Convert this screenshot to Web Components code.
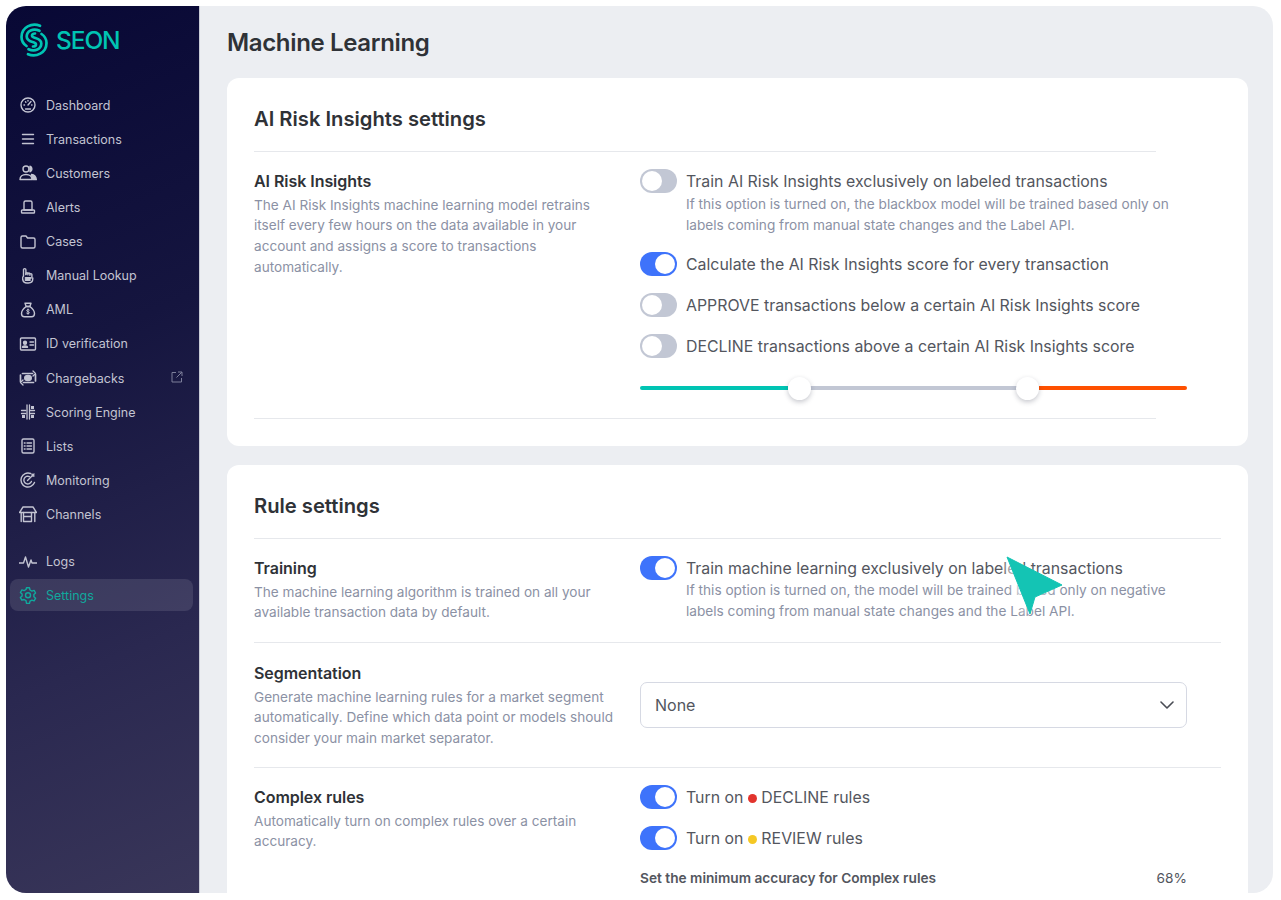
<!DOCTYPE html>
<html>
<head>
<meta charset="utf-8">
<title>Machine Learning</title>
<style>
  html, body { margin: 0; background: #fff; }
  body { font-family: Inter, "Liberation Sans", sans-serif; padding: 6px 8px 0 6px; height: 894px; box-sizing: border-box; overflow: hidden; }
</style>
</head>
<body>
<seon-app>
  <seon-sidebar slot="side"></seon-sidebar>
  <h-title slot="main">Machine Learning</h-title>

  <seon-card slot="main" heading="AI Risk Insights settings" short style="height:368px">
    <seon-row label="AI Risk Insights" top="17" desc="The AI Risk Insights machine learning model retrains itself every few hours on the data available in your account and assigns a score to transactions automatically.">
      <seon-option nudge note="If this option is turned on, the blackbox model will be trained based only on labels coming from manual state changes and the Label API.">Train AI Risk Insights exclusively on labeled transactions</seon-option>
      <seon-option on>Calculate the AI Risk Insights score for every transaction</seon-option>
      <seon-option>APPROVE transactions below a certain AI Risk Insights score</seon-option>
      <seon-option>DECLINE transactions above a certain AI Risk Insights score</seon-option>
      <seon-range></seon-range>
    </seon-row>
  </seon-card>

  <seon-card slot="main" heading="Rule settings" style="margin-top:19px">
    <seon-row label="Training" top="17" line desc="The machine learning algorithm is trained on all your available transaction data by default." style="height:104px">
      <seon-option on note="If this option is turned on, the model will be trained based only on negative labels coming from manual state changes and the Label API.">Train machine learning exclusively on labeled transactions</seon-option>
    </seon-row>
    <seon-row label="Segmentation" top="18" line desc="Generate machine learning rules for a market segment automatically. Define which data point or models should consider your main market separator." style="height:125px">
      <seon-select>None</seon-select>
    </seon-row>
    <seon-row label="Complex rules" top="17" desc="Automatically turn on complex rules over a certain accuracy." style="padding-bottom:60px">
      <seon-option on>Turn on <seon-dot color="#e2342d"></seon-dot> DECLINE rules</seon-option>
      <seon-option on>Turn on <seon-dot color="#f5c824"></seon-dot> REVIEW rules</seon-option>
      <seon-accuracy></seon-accuracy>
    </seon-row>
  </seon-card>
  <seon-cursor slot="over"></seon-cursor>
</seon-app>

<script>
  // small helper, every element below is just a shadow root with its own style
  let shadow = (el, html) => { el.attachShadow({ mode: "open" }).innerHTML = html; };

  customElements.define("seon-app", class extends HTMLElement {
    connectedCallback() {
      shadow(this, `<style>
        :host { display: flex; position: relative; width: 1267px; height: 887px; border-radius: 20px; overflow: hidden; background: #eceef2; }
        .main { flex: 1; min-width: 0; padding: 0 25px 0 27px; overflow: hidden; }
      </style>
      <slot name="side"></slot>
      <div class="main"><slot name="main"></slot></div>
      <slot name="over"></slot>`);
    }
  });

  customElements.define("h-title", class extends HTMLElement {
    connectedCallback() {
      shadow(this, `<style>
        :host { display: block; height: 72px; padding-top: 20px; box-sizing: border-box; font-size: 24px; line-height: 34px; font-weight: 600; color: #2f3237; letter-spacing: -.35px; }
      </style><slot></slot>`);
    }
  });

  const ICONS = {
    Dashboard: '<circle cx="9" cy="9" r="7"/><path d="M9 9l3-3.500"/><path d="M5 9h.5M6.500 5.800l.4.4M9 4.400v.6M13 9h-.4M6.500 13h5"/>',
    Transactions: '<path d="M3.500 4.500h11M3.500 9h11M3.500 13.500h11"/>',
    Customers: '<circle cx="7" cy="5" r="3"/><path d="M1 15.500c0-3 2.500-5 6-5s6 2 6 5z"/><path d="M11 2.200a3 3 0 010 5.600z" fill="currentColor"/><path d="M12.500 10.500c2.500 .3 4.500 2 4.800 5h-3.500z" fill="currentColor"/>',
    Alerts: '<path d="M5 12V4.500a1.500 1.500 0 011.500-1.500h5a1.500 1.500 0 011.500 1.500V12z"/><rect x="2.500" y="12" width="13" height="3" rx=".8"/>',
    Cases: '<path d="M2 4.500A1.500 1.500 0 013.500 3h3.500l1.500 2h6A1.500 1.500 0 0116 6.500v7a1.500 1.500 0 01-1.500 1.500h-11A1.500 1.500 0 012 13.500z"/>',
    "Manual Lookup": '<path d="M4.500 9V2.800a1.200 1.200 0 012.400 0V7.500"/><path d="M6.900 7.500V6.800a1 1 0 012 0v1M8.900 7.800V7a1 1 0 012 0v1M10.900 8.200V7.600a1 1 0 012 0v3.400"/><path d="M4.500 9c-1 .6-1 2-.8 3.500.4 2.200 2 3.500 4.300 3.500h1.500c2.800 0 4.300-2 4.300-4.500V11"/><path d="M6.500 11h5M6.500 13h4.500" stroke-width="1.800"/>',
    AML: '<path d="M6 2.200h6L10.800 5.500H7.200z"/><path d="M7.200 5.500C4.500 7.500 2.500 10 2.500 12.500c0 2 1.200 3.200 3 3.200h7c1.800 0 3-1.200 3-3.200 0-2.500-2-5-4.700-7z"/><path d="M10.300 9c-.5-.6-2.600-.8-2.600.6 0 1.300 2.600.8 2.600 2.100 0 1.300-2.100 1.200-2.700.5M9 8v5.200" stroke-width="1"/>',
    "ID verification": '<rect x="1.500" y="3" width="15" height="12" rx="1"/><circle cx="6" cy="7.800" r="1.500" fill="currentColor"/><path d="M3.500 12.200c0-1.800 5-1.800 5 0z" fill="currentColor"/><path d="M11 7h3.500M11 10h3.500"/>',
    Chargebacks: '<path d="M3.500 4.500h10M4.500 13.500h10M1.500 6v6.500M16.500 5.500V12" stroke-width="1.700"/><ellipse cx="9" cy="9" rx="3.300" ry="2.600" fill="currentColor"/><path d="M14 2l2.500 2.500L14 7M4 11l-2.500 2.500L4 16" stroke-width="1.300"/>',
    "Scoring Engine": '<path d="M8 2v14M10.500 2v14" stroke-width="1.300"/><path d="M2.500 7.500h4.300M11.500 7.500h4M2.500 10.500h4.300M11.500 10.500h4" stroke-width="1.300"/><rect x="3" y="12" width="3" height="3" fill="currentColor" stroke="none"/><rect x="12" y="12" width="3" height="3" fill="currentColor" stroke="none"/><rect x="12" y="3" width="3" height="3" fill="currentColor" stroke="none"/>',
    Lists: '<rect x="3" y="2" width="12" height="14" rx="1.500"/><path d="M8 6h4.500M8 9h4.500M8 12h4.500M5.300 6h.8M5.300 9h.8M5.300 12h.8"/>',
    Monitoring: '<path d="M11.500 2.500A7 7 0 1015.500 11.500"/><path d="M10.500 5.600A3.900 3.900 0 1012.400 10.500"/><path d="M8.500 9.500l6.500-6.500M13 3l.3 1.700L15 5"/>',
    Channels: '<path d="M4 2h10l3.500 5.500H.5z"/><path d="M2.200 7.500V16.500M15.800 7.500V16.500M4.500 7.500V16.500h8V7.500M4.500 11.500h8"/>',
    Logs: '<path d="M0 10h4.500l2-6 3 10 2.500-7 1 3H18"/>',
    Settings: '<path d="M7.500 1.800h3l.5 2.200 1.900 1.100 2.200-.7 1.500 2.600-1.700 1.500v2.200l1.700 1.500-1.500 2.600-2.200-.7-1.900 1.100-.5 2.200h-3L7 14.600l-1.900-1.100-2.200.7-1.500-2.600 1.700-1.500V8l-1.700-1.500 1.500-2.600 2.200.7L7 3.500z"/><circle cx="9" cy="9.300" r="2.500"/>'
  };

  customElements.define("seon-sidebar", class extends HTMLElement {
    connectedCallback() {
      let item = (name, cls = "") => `<a class="${cls}"><svg viewBox="0 0 18 18" width="18" height="18" fill="none" stroke="currentColor" stroke-width="1.400" stroke-linecap="round" stroke-linejoin="round">${ICONS[name]}</svg><span>${name}</span>${name == "Chargebacks" ? '<svg class="ext" viewBox="0 0 12 12" width="12" height="12" fill="none" stroke="currentColor" stroke-width="1"><path d="M5 1.500H1v9.500h9.500V7M7 1h4v4M11 1L5.500 6.500"/></svg>' : ""}</a>`;
      let top = ["Dashboard", "Transactions", "Customers", "Alerts", "Cases", "Manual Lookup", "AML", "ID verification", "Chargebacks", "Scoring Engine", "Lists", "Monitoring", "Channels"];
      shadow(this, `<style>
        :host { display: block; flex: none; width: 194px; box-sizing: border-box; padding: 0 6px 0 4px; background: linear-gradient(157deg, #080835 0%, #15153f 38%, #2a2850 72%, #393659 100%); border-right: 1px solid #c9ccd6; }
        .logo { display: flex; align-items: center; gap: 8px; height: 68px; padding: 0 0 0 10px; color: #00c4b3; font-size: 24.5px; font-weight: 500; letter-spacing: -1.1px; }
        nav { display: flex; flex-direction: column; margin-top: 14.1px; }
        a { display: flex; align-items: center; height: 34.11px; padding-left: 9px; gap: 9px; color: #c3c4d2; font-size: 12.5px; position: relative; border-radius: 8px; }
        .ext { position: absolute; right: 10px; top: 10px; color: #7d7f9a; }
        .gap { height: 13px; }
        .active { background: rgba(255, 255, 255, .11); color: #10a99d; height: 32px; margin-top: .6px; }
      </style>
      <div class="logo">
        <svg viewBox="0 0 28 34" width="28" height="34" fill="none" stroke="#00c4b3" stroke-width="2.700" stroke-linecap="round" stroke-linejoin="round">
          <path d="M20 2.800C12-.5 1.500 4 1.500 14c0 4 2 7 5 9"/>
          <path d="M19.500 7.800C13 4.800 6.700 8 6.700 13.500c0 4.500 4.500 5 7.300 6 3 1 2.500 4-1 4"/>
          <path d="M8 31.200C16 34.500 26.500 30 26.500 20c0-4-2-7-5-9"/>
          <path d="M8.500 26.200C15 29.200 21.300 26 21.300 20.500c0-4.500-4.500-5-7.300-6-3-1-2.500-4 1-4"/>
        </svg>
        <span>SEON</span>
      </div>
      <nav>
        ${top.map(n => item(n)).join("")}
        <div class="gap"></div>
        ${item("Logs")}
        ${item("Settings", "active")}
      </nav>`);
    }
  });

  customElements.define("seon-card", class extends HTMLElement {
    connectedCallback() {
      let short = this.hasAttribute("short");
      shadow(this, `<style>
        :host { display: block; box-sizing: border-box; background: #fff; border-radius: 12px; padding: 0 27px; }
        h2 { margin: 0; height: 74px; box-sizing: border-box; padding-top: 24px; font-size: 20.2px; line-height: 34px; font-weight: 600; color: #2f3237; border-bottom: 1px solid #e6e8ec; ${short ? "margin-right: 65px;" : ""} }
        .end { ${short ? "border-bottom: 1px solid #e6e8ec; margin-right: 65px;" : ""} }
      </style>
      <h2>${this.getAttribute("heading")}</h2>
      <div class="end"><slot></slot></div>`);
    }
  });

  customElements.define("seon-row", class extends HTMLElement {
    connectedCallback() {
      let top = this.getAttribute("top") || 17;
      shadow(this, `<style>
        :host { display: grid; grid-template-columns: 362px 547px; column-gap: 24px; box-sizing: border-box; padding-top: ${top}px; ${this.hasAttribute("line") ? "border-bottom: 1px solid #e6e8ec;" : ""} }
        b { display: block; font-size: 16px; line-height: 24px; font-weight: 600; color: #2f3237; letter-spacing: -.05px; }
        p { margin: 1.8px 0 0; font-size: 13.6px; line-height: 20.6px; color: #8b91a4; }
        .right { display: flex; flex-direction: column; gap: 17px; }
      </style>
      <div><b>${this.getAttribute("label")}</b><p>${this.getAttribute("desc")}</p></div>
      <div class="right"><slot></slot></div>`);
    }
  });

  customElements.define("seon-option", class extends HTMLElement {
    connectedCallback() {
      let note = this.getAttribute("note");
      let nudge = this.hasAttribute("nudge") ? 1 : 0; // first card sits 1px lower than the second one
      shadow(this, `<style>
        :host { display: grid; grid-template-columns: 37px 1fr; grid-template-rows: 24px auto; column-gap: 9px; }
        .sw { box-sizing: border-box; width: 37px; height: 24px; border-radius: 12px; background: ${this.hasAttribute("on") ? "#3e73fb" : "#c2c7d4"}; position: relative; }
        .sw i { position: absolute; top: 2px; ${this.hasAttribute("on") ? "right: 2px" : "left: 2px"}; width: 20px; height: 20px; border-radius: 50%; background: #fff; }
        .t { font-size: 15.88px; line-height: 24px; padding-top: 1px; height: 24px; color: #53565e; white-space: nowrap; }
        .n { grid-column: 2; font-size: 13.65px; line-height: 21px; color: #8b91a4; margin-top: ${nudge}px; margin-bottom: ${-nudge}px; }
      </style>
      <div class="sw"><i></i></div>
      <div class="t"><slot></slot></div>
      ${note ? `<div class="n">${note}</div>` : ""}`);
    }
  });

  customElements.define("seon-dot", class extends HTMLElement {
    connectedCallback() {
      shadow(this, `<style>:host { display: inline-block; width: 9px; height: 9px; border-radius: 50%; background: ${this.getAttribute("color")}; }</style>`);
    }
  });

  customElements.define("seon-range", class extends HTMLElement {
    connectedCallback() {
      shadow(this, `<style>
        :host { display: flex; align-items: center; height: 24px; margin: 1px 0 18px; }
        .tr { height: 4px; }
        .a { width: 148px; background: #00c4b3; border-radius: 2px 0 0 2px; }
        .b { width: 207px; background: #c2c7d4; margin: 0 -1px; }
        .c { flex: 1; background: #fe5000; border-radius: 0 2px 2px 0; }
        i { flex: none; width: 23px; height: 23px; border-radius: 50%; background: #fff; box-shadow: 0 2px 5px rgba(30, 35, 60, .25); z-index: 1; }
      </style>
      <div class="tr a"></div><i></i><div class="tr b"></div><i></i><div class="tr c"></div>`);
    }
  });

  customElements.define("seon-select", class extends HTMLElement {
    connectedCallback() {
      shadow(this, `<style>
        :host { display: flex; align-items: center; justify-content: space-between; box-sizing: border-box; height: 46px; margin-top: 21px; padding: 0 12px 0 14px; border: 1px solid #d6d9e3; border-radius: 7px; font-size: 16px; color: #53565e; }
      </style>
      <slot></slot>
      <svg viewBox="0 0 14 8" width="14" height="8" fill="none" stroke="#4a4d55" stroke-width="1.600" stroke-linecap="round" stroke-linejoin="round"><path d="M1 1l6 6 6-6"/></svg>`);
    }
  });

  customElements.define("seon-accuracy", class extends HTMLElement {
    connectedCallback() {
      shadow(this, `<style>
        :host { display: flex; justify-content: space-between; font-size: 13.7px; line-height: 20px; color: #53565e; margin-top: 1px; }
        b { font-weight: 600; }
      </style>
      <b>Set the minimum accuracy for Complex rules</b><span>68%</span>`);
    }
  });

  customElements.define("seon-cursor", class extends HTMLElement {
    connectedCallback() {
      shadow(this, `<style>
        :host { position: absolute; left: 996px; top: 545px; width: 70px; height: 70px; filter: drop-shadow(-4px 2px 4px rgba(255, 255, 255, .7)); }
        svg { display: block; }
      </style>
      <svg viewBox="0 0 70 70" width="70" height="70"><path d="M5 6L60 34 33 46 28 63z" fill="#14c4b4" stroke="#14c4b4" stroke-linejoin="round" stroke-width="1"/></svg>`);
    }
  });
</script>
</body>
</html>
